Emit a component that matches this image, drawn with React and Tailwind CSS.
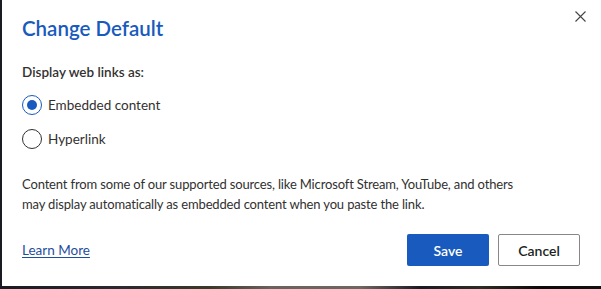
import React from "react";

export default function App() {
  return (
    <div className="w-[601px] h-[289px] bg-[linear-gradient(90deg,#1a1a22_0%,#2a2a30_20%,#3a3a2a_35%,#6a625c_45%,#6e6660_60%,#1a1a24_70%,#2d2d25_80%,#0a0a0a_90%,#111_100%)] overflow-hidden" style={{ fontFamily: 'Lato, "Noto Sans", sans-serif' }}>
      <div className="ml-[2px] h-[286px] bg-white relative px-[20px] pt-[14px]">
        <button className="absolute right-[14px] top-[9px] w-[14px] h-[14px] flex items-center justify-center text-[#444]">
          <svg width="11" height="11" viewBox="0 0 11 11" fill="none" stroke="#444" strokeWidth="1.1">
            <path d="M0.5 0.5L10.5 10.5M10.5 0.5L0.5 10.5" />
          </svg>
        </button>
        <h1 className="text-[20.5px] leading-[28px] font-semibold text-[#185abd]">Change Default</h1>
        <div className="mt-[20px] text-[13.5px] leading-[20px] font-semibold text-[#323130]">Display web links as:</div>
        <div className="mt-[13px] flex flex-col gap-[14px]">
          <label className="flex items-center gap-[6px] h-[20px]">
            <span className="w-[20px] h-[20px] rounded-full border border-[#185abd] flex items-center justify-center">
              <span className="w-[10px] h-[10px] rounded-full bg-[#185abd]" />
            </span>
            <span className="text-[13.5px] text-[#323130]">Embedded content</span>
          </label>
          <label className="flex items-center gap-[6px] h-[20px]">
            <span className="w-[20px] h-[20px] rounded-full border border-[#323130]" />
            <span className="text-[13.5px] text-[#323130]">Hyperlink</span>
          </label>
        </div>
        <p className="mt-[25px] text-[13px] tracking-[-0.15px] leading-[20px] text-[#323130] whitespace-nowrap">
          Content from some of our supported sources, like Microsoft Stream, YouTube, and others
          <br />
          may display automatically as embedded content when you paste the link.
        </p>
        <div className="mt-[20px] flex items-center justify-between pr-[1px]">
          <a className="text-[13.5px] text-[#1f4e9c] underline underline-offset-2">Learn More</a>
          <div className="flex gap-[9px]">
            <button className="w-[82px] h-[32px] rounded-[2px] bg-[#185abd] text-white text-[14px] font-semibold">Save</button>
            <button className="w-[82px] h-[32px] rounded-[2px] border border-[#8a8886] bg-white text-[#201f1e] text-[14px] font-semibold">Cancel</button>
          </div>
        </div>
      </div>
    </div>
  );
}
